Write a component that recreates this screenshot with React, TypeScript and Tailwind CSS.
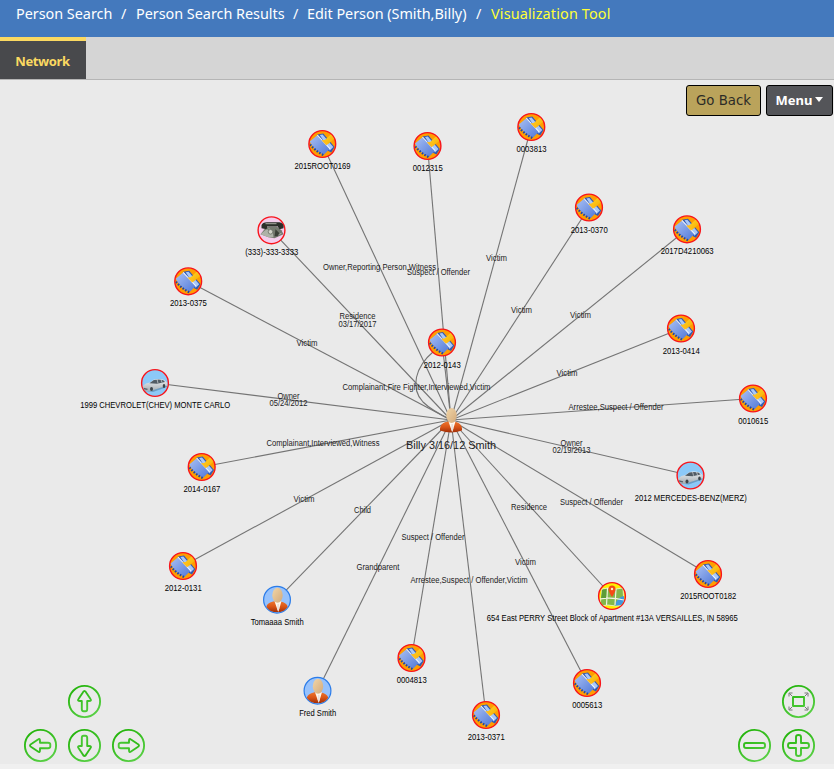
import React from "react";

type Kind = "case" | "phone" | "car" | "person" | "map";
type GraphNode = { x: number; y: number; kind: Kind; label: string; w: number };
type EdgeLabel = { x: number; y: number; text: string; w: number };

const HUB = { x: 451, y: 420 };

const nodes: GraphNode[] = [
  { x: 322.3, y: 144, kind: "case", label: "2015ROOT0169", w: 56 },
  { x: 427.5, y: 146, kind: "case", label: "0012315", w: 30 },
  { x: 531.3, y: 127, kind: "case", label: "0003813", w: 30 },
  { x: 589, y: 207.5, kind: "case", label: "2013-0370", w: 37 },
  { x: 687, y: 229.3, kind: "case", label: "2017D4210063", w: 53 },
  { x: 271.5, y: 230.3, kind: "phone", label: "(333)-333-3333", w: 53 },
  { x: 188.2, y: 281.3, kind: "case", label: "2013-0375", w: 37 },
  { x: 681, y: 328.5, kind: "case", label: "2013-0414", w: 37 },
  { x: 442, y: 342.5, kind: "case", label: "2012-0143", w: 37 },
  { x: 155, y: 383, kind: "car", label: "1999 CHEVROLET(CHEV) MONTE CARLO", w: 150 },
  { x: 753, y: 398.5, kind: "case", label: "0010615", w: 30 },
  { x: 201.7, y: 467, kind: "case", label: "2014-0167", w: 37 },
  { x: 690.5, y: 475.5, kind: "car", label: "2012 MERCEDES-BENZ(MERZ)", w: 112 },
  { x: 183, y: 566, kind: "case", label: "2012-0131", w: 37 },
  { x: 277, y: 599.7, kind: "person", label: "Tomaaaa Smith", w: 53 },
  { x: 708, y: 574, kind: "case", label: "2015ROOT0182", w: 56 },
  { x: 612, y: 596, kind: "map", label: "654 East PERRY Street Block of Apartment #13A VERSAILLES, IN 58965", w: 251 },
  { x: 411.5, y: 658, kind: "case", label: "0004813", w: 30 },
  { x: 317.5, y: 690.7, kind: "person", label: "Fred Smith", w: 37 },
  { x: 587, y: 683, kind: "case", label: "0005613", w: 30 },
  { x: 486, y: 715, kind: "case", label: "2013-0371", w: 37 },
];

const edgeLabels: EdgeLabel[] = [
  { x: 379.5, y: 267, text: "Owner,Reporting Person,Witness", w: 113 },
  { x: 438.5, y: 272, text: "Suspect / Offender", w: 63 },
  { x: 496.5, y: 258, text: "Victim", w: 21 },
  { x: 521.5, y: 310, text: "Victim", w: 21 },
  { x: 580.5, y: 315, text: "Victim", w: 21 },
  { x: 357.5, y: 316, text: "Residence", w: 36 },
  { x: 357.5, y: 324, text: "03/17/2017", w: 38 },
  { x: 307, y: 343, text: "Victim", w: 21 },
  { x: 567, y: 373, text: "Victim", w: 21 },
  { x: 416.5, y: 387, text: "Complainant,Fire Fighter,Interviewed,Victim", w: 148 },
  { x: 288.5, y: 396, text: "Owner", w: 22 },
  { x: 288.5, y: 403, text: "05/24/2012", w: 38 },
  { x: 616, y: 407, text: "Arrestee,Suspect / Offender", w: 95 },
  { x: 323, y: 443, text: "Complainant,Interviewed,Witness", w: 113 },
  { x: 571.5, y: 443, text: "Owner", w: 22 },
  { x: 571.5, y: 450, text: "02/19/2013", w: 38 },
  { x: 304, y: 499, text: "Victim", w: 21 },
  { x: 362.5, y: 510, text: "Child", w: 17 },
  { x: 529, y: 507, text: "Residence", w: 36 },
  { x: 591.5, y: 502, text: "Suspect / Offender", w: 63 },
  { x: 433, y: 537, text: "Suspect / Offender", w: 63 },
  { x: 378, y: 567, text: "Grandparent", w: 43 },
  { x: 525.5, y: 562, text: "Victim", w: 21 },
  { x: 469, y: 580, text: "Arrestee,Suspect / Offender,Victim", w: 117 },
];

function CaseIcon() {
  return (
    <g>
      <circle r="13.4" fill="#ff9d00" stroke="#f8141b" strokeWidth="1.4" />
      <g clipPath="url(#disc)">
        <path d="M-5 -9.500 L1 -10.500 L12.300 3 L9 8.500 L6 7Z" fill="#3159b4" />
        <path d="M-2.500 -9 L.3 -9.500 L11 3 L7.500 6.500Z" fill="#a9c8f8" />
        <path d="M-12.500 -2.500 L-5 -8.800 L7.500 4.800 L1.500 10.800 Q-8 7 -12.500 -2.500Z" fill="url(#bookBlue)" />
        <path d="M-5 -9 L7.800 4.900" fill="none" stroke="#eef5ff" strokeWidth="1.100" />
        <path d="M-12.300 .5 Q-7 7 1.500 11.300" fill="none" stroke="#24479f" strokeWidth="2.200" strokeDasharray="1.600 1.500" />
        <path d="M2 -3.500 L9.500 -10.500 L13 -6 L5.500 .2Z" fill="url(#penGold)" />
        <path d="M-.8 -3.800 L2.500 -4 L6 -.4 L4 1.300Z" fill="#ffbd1a" />
      </g>
    </g>
  );
}

function PersonFigure() {
  return (
    <g>
      <path d="M-11 10.500 C-11.500 5 -8 2.500 -3 1.500 H3 C8 2.500 11.500 5 11 10.500 Q0 14.500 -11 10.500Z" fill="url(#shirt)" />
      <path d="M-2.500 1.500 L1.200 12.300 L4.500 1.500Z" fill="#fff8ed" />
      <path d="M.4 4 H2 L2.300 9 L1.200 11.500 L.2 9Z" fill="#e9e0da" />
      <ellipse cx=".5" cy="-4.500" rx="5.200" ry="7.500" fill="url(#skin)" />
    </g>
  );
}

function PersonIcon() {
  return (
    <g>
      <circle r="13.400" fill="#97c2fc" stroke="#2b7ce9" strokeWidth="1.200" />
      <g clipPath="url(#disc)"><PersonFigure /></g>
    </g>
  );
}

function CarIcon() {
  return (
    <g>
      <circle r="13.400" fill="#8cc9f8" stroke="#f8141b" strokeWidth="1.400" />
      <g clipPath="url(#disc)">
        <path d="M-10 8 L-2 9 L12 4 V1 L-10 5Z" fill="#5e8cae" opacity=".7" />
        <path d="M-12.500 3 L-9 .5 L-5 -.5 L-1 -3.500 Q4 -4.800 8.500 -3.200 L12 -.5 L12.500 2.500 L0 6.500 L-6 8.500 L-11.500 7.500Z" fill="url(#silver)" />
        <path d="M-5.500 .2 L-1.200 -3 Q4 -4.200 8.300 -2.700 L10 -1 L2 .8Z" fill="#505b64" />
        <path d="M2 -4 L3 .3 M6 -3.500 L7 -.5" stroke="#d7dadd" strokeWidth=".7" />
        <path d="M-11.500 5.500 L-7.500 6.300" stroke="#59636b" strokeWidth="1.300" />
        <ellipse cx="-3.500" cy="6" rx="1.500" ry="2.100" fill="#3d454b" />
        <ellipse cx="9" cy="3" rx="1.300" ry="1.900" fill="#3d454b" />
      </g>
    </g>
  );
}

function PhoneIcon() {
  return (
    <g>
      <circle r="13.400" fill="#f4cdec" stroke="#f8141b" strokeWidth="1.400" />
      <path d="M-7 -1 L-3 -4 H5 L10 0 L12 4 L3 8 L-3 7 L-11 4Z" fill="#74796f" />
      <path d="M-11 4 L-5 -1 L1 1 L2 7 L-3 7Z" fill="#aeb2a8" />
      <path d="M-10 -5 Q-9 -8.500 -3 -8 L8 -8 Q13 -7 12 -2 L8 -1 L6 -4 L-4 -4 L-5 -1 L-10 -2Z" fill="#2b2e29" />
      <path d="M-6 -6.600 L5 -6.600 M-3 -2 L1 1 M5 5 L10 3" stroke="#b4b7ad" strokeWidth=".9" />
      <circle cx="-1" cy="1.500" r="2.300" fill="#d0d2c8" stroke="#62665d" strokeWidth=".7" />
      <path d="M4 -1 L8 3 L6 6 L3 6Z" fill="#3b4038" />
    </g>
  );
}

function MapIcon() {
  return (
    <g>
      <circle r="13.400" fill="#fff000" stroke="#f8141b" strokeWidth="1.400" />
      <g clipPath="url(#disc)">
        <path d="M-10 -7 L-4 -8 L4 -7 L11 -8 L12 9 L4 10 L-4 9 L-12 10Z" fill="#82b84b" stroke="#eff3d9" strokeWidth=".8" />
        <path d="M12 0 Q5 1 3 9.500 L12 9Z" fill="#4299df" />
        <path d="M-4.500 -8 L-5.500 9 M-12 3 Q-1 1 12 4 M4 -7 L3 9" stroke="#f2f3e4" strokeWidth="1.200" fill="none" />
        <path d="M-10 -6 L-5.500 -7 L-6 2 L-11 2Z" fill="#5c9d38" />
        <path d="M0 1 Q-3.500 -4 -3.500 -7 A3.500 3.500 0 0 1 3.500 -7 Q3.500 -4 0 1Z" fill="#f44b15" />
        <circle cy="-7" r="1.200" fill="#fff2bc" />
      </g>
    </g>
  );
}

const icons: Record<Kind, () => React.JSX.Element> = {
  case: CaseIcon,
  phone: PhoneIcon,
  car: CarIcon,
  person: PersonIcon,
  map: MapIcon,
};

const ARROW = "M0 -10.500 Q1 -10.500 2 -8.500 L6 -2.500 Q7.500 -.5 4.500 -.5 H2.700 V7.500 Q2.700 9.800 1 9.800 H-1 Q-2.700 9.800 -2.700 7.500 V-.5 H-4.500 Q-7.500 -.5 -6 -2.500 L-2 -8.500 Q-1 -10.500 0 -10.500Z";

function Control({ x, y, name, children }: { x: number; y: number; name: string; children: React.ReactNode }) {
  return (
    <g transform={`translate(${x} ${y})`} role="button" aria-label={name} fill="none" stroke="url(#green)" strokeWidth="1.900" strokeLinejoin="round" strokeLinecap="round">
      <circle r="15.600" />
      {children}
    </g>
  );
}

function Network() {
  return (
    <svg className="block h-[684px] w-[834px] font-['Liberation_Sans',Arial,sans-serif]" viewBox="0 80 834 684">
      <defs>
        <linearGradient id="bookBlue" x1="0" y1="0" x2="1" y2="1"><stop stopColor="#a9c0f3" /><stop offset="1" stopColor="#5078d8" /></linearGradient>
        <linearGradient id="penGold" x1="0" y1="0" x2="1" y2="1"><stop stopColor="#ffd52a" /><stop offset="1" stopColor="#f6a900" /></linearGradient>
        <linearGradient id="skin" x1="0" y1="0" x2="1" y2="1"><stop stopColor="#f1d6a8" /><stop offset="1" stopColor="#d3a97a" /></linearGradient>
        <linearGradient id="shirt" x1="0" y1="0" x2="0" y2="1"><stop stopColor="#ee752d" /><stop offset=".5" stopColor="#d95517" /><stop offset="1" stopColor="#a02e07" /></linearGradient>
        <linearGradient id="silver" x1="0" y1="0" x2="0" y2="1"><stop stopColor="#eef0f2" /><stop offset="1" stopColor="#a3abb1" /></linearGradient>
        <linearGradient id="green" gradientUnits="userSpaceOnUse" x1="-8" y1="-14" x2="8" y2="14"><stop stopColor="#25b50d" /><stop offset="1" stopColor="#57cf43" /></linearGradient>
        <clipPath id="disc"><circle r="12.800" /></clipPath>
      </defs>

      <g stroke="#747474" strokeWidth="1.100" fill="none">
        {nodes.map((n) => <line key={n.label} x1={HUB.x} y1={HUB.y} x2={n.x} y2={n.y} />)}
        <path d="M434 351 C415 367 410 388 423 402 C430 409 441 415 451 420" />
      </g>

      <g transform="translate(451 420)"><PersonFigure /></g>
      {nodes.map((n) => {
        const Icon = icons[n.kind];
        return <g key={n.label} transform={`translate(${n.x} ${n.y})`}><Icon /></g>;
      })}

      <g fill="#000" textAnchor="middle" fontSize="8.400">
        {nodes.map((n) => (
          <text key={n.label} x={n.x + 0.2} y={Math.round(n.y + 25)} textLength={n.w} lengthAdjust="spacingAndGlyphs">{n.label}</text>
        ))}
        {edgeLabels.map((e, i) => (
          <text key={i} x={e.x} y={e.y + 3} fill="#1c1c1c" textLength={e.w} lengthAdjust="spacingAndGlyphs">{e.text}</text>
        ))}
        <text x="451" y="449" fontSize="11.200" fill="#222" textLength="90" lengthAdjust="spacingAndGlyphs">Billy 3/16/12 Smith</text>
      </g>

      <Control x={84.500} y={701.500} name="Up"><path d={ARROW} /></Control>
      <Control x={40.500} y={745.500} name="Left"><path d={ARROW} transform="rotate(-90)" /></Control>
      <Control x={84.500} y={745.500} name="Down"><path d={ARROW} transform="rotate(180)" /></Control>
      <Control x={128.500} y={745.500} name="Right"><path d={ARROW} transform="rotate(90)" /></Control>
      <Control x={798.500} y={701.500} name="Fit">
        <rect x="-5.500" y="-4.500" width="11" height="9" />
        <path d="M-6.500 -5.500 L-9 -8 M-9.500 -5 V-8.500 H-6 M6.500 -5.500 L9 -8 M9.500 -5 V-8.500 H6 M-6.500 5.500 L-9 8 M-9.500 5 V8.500 H-6 M6.500 5.500 L9 8 M9.500 5 V8.500 H6" stroke="#777" strokeWidth="1" strokeLinecap="butt" />
      </Control>
      <Control x={754.500} y={745.500} name="Zoom out"><rect x="-10.500" y="-2.500" width="21" height="5" rx="2" /></Control>
      <Control x={798.500} y={745.500} name="Zoom in"><path d="M-2.500 -8.500 Q-2.500 -10.500 0 -10.500 Q2.500 -10.500 2.500 -8.500 V-2.500 H8.500 Q10.500 -2.500 10.500 0 Q10.500 2.500 8.500 2.500 H2.500 V8.500 Q2.500 10.500 0 10.500 Q-2.500 10.500 -2.500 8.500 V2.500 H-8.500 Q-10.500 2.500 -10.500 0 Q-10.500 -2.500 -8.500 -2.500 H-2.500Z" /></Control>
    </svg>
  );
}

export default function App() {
  return (
    <div className="flex h-[769px] w-[834px] flex-col overflow-hidden bg-[#f0f0f0]">
      <nav className="flex h-[37px] shrink-0 items-start bg-[#4479bd] pl-4 font-['Noto_Sans',sans-serif] text-[14.4px] leading-[28px] tracking-[-0.02px] whitespace-nowrap text-white">
        <a className="w-[105px]">Person Search</a><span className="w-[15px]">/</span>
        <a className="w-[157px]">Person Search Results</a><span className="w-[14px]">/</span>
        <a className="w-[169px]">Edit Person (Smith,Billy)</a><span className="w-[15px]">/</span>
        <span className="tracking-[0.15px] text-[#ffff36]">Visualization Tool</span>
      </nav>
      <div className="flex h-[43px] shrink-0 border-b border-[#b5b5b5] bg-[#d5d5d5]">
        <div className="flex w-[86px] items-center justify-center border-t-4 border-[#fbd961] bg-[#48494c] pt-1 pr-px font-['Noto_Sans',sans-serif] text-[13px] font-bold tracking-[-0.4px] text-[#fbd961]">Network</div>
      </div>
      <main className="relative h-[684px] shrink-0 bg-[#eaeaea]">
        <Network />
        <div className="absolute top-[5px] right-px flex gap-[5px] font-['DejaVu_Sans',sans-serif] text-[13.3px]">
          <button className="h-[31px] w-[75px] rounded-[3px] border border-black bg-[#baa35b] pt-px whitespace-nowrap text-[#2c2b27]">Go Back</button>
          <button className="flex h-[31px] w-[67px] items-center justify-center gap-[3px] rounded-[3px] border border-black bg-[#545559] font-['Noto_Sans',sans-serif] text-[13px] font-bold text-white">
            <span className="pt-px">Menu</span><span className="mb-0.5 border-x-[4.500px] border-t-[5px] border-x-transparent border-t-white" />
          </button>
        </div>
      </main>
    </div>
  );
}
